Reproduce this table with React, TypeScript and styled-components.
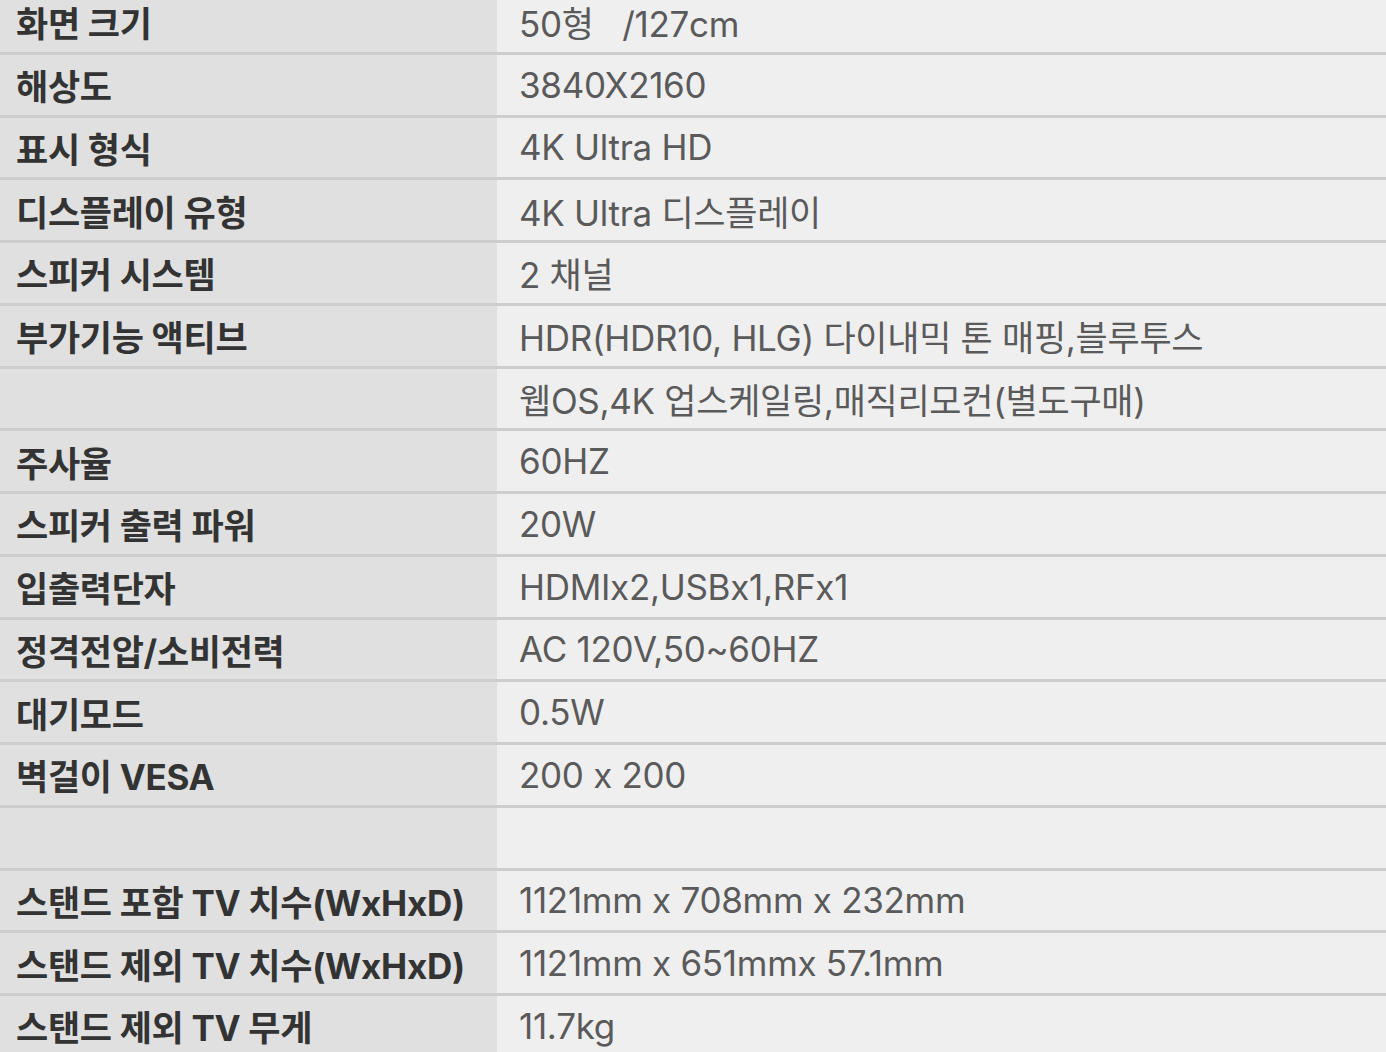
import styled, { createGlobalStyle } from "styled-components";

const GlobalStyle = createGlobalStyle`
    html, body {
        margin: 0;
        padding: 0;
        background: #efefef;
        overflow: hidden;
    }
`;

type Spec = { label: string; value: string };

const specs: Spec[] = [
    { label: "화면 크기", value: "50형   /127cm" },
    { label: "해상도", value: "3840X2160" },
    { label: "표시 형식", value: "4K Ultra HD" },
    { label: "디스플레이 유형", value: "4K Ultra 디스플레이" },
    { label: "스피커 시스템", value: "2 채널" },
    { label: "부가기능 액티브", value: "HDR(HDR10, HLG) 다이내믹 톤 매핑,블루투스" },
    { label: "", value: "웹OS,4K 업스케일링,매직리모컨(별도구매)" },
    { label: "주사율", value: "60HZ" },
    { label: "스피커 출력 파워", value: "20W" },
    { label: "입출력단자", value: "HDMIx2,USBx1,RFx1" },
    { label: "정격전압/소비전력", value: "AC 120V,50~60HZ" },
    { label: "대기모드", value: "0.5W" },
    { label: "벽걸이 VESA", value: "200 x 200" },
    { label: "", value: "" },
    { label: "스탠드 포함 TV 치수(WxHxD)", value: "1121mm x 708mm x 232mm" },
    { label: "스탠드 제외 TV 치수(WxHxD)", value: "1121mm x 651mmx 57.1mm" },
    { label: "스탠드 제외 TV 무게", value: "11.7kg" },
];

const App = () => {
    return <>
        <GlobalStyle />
        <SpecTable>
            {specs.map((s, i) => (
                <SpecRow key={i}>
                    <LabelCell>{s.label}</LabelCell>
                    <ValueCell>{s.value}</ValueCell>
                </SpecRow>
            ))}
        </SpecTable>
    </>
}

export default App;

const SpecTable = styled.div`
    margin-top: -8px;
    width: 1386px;
`;

const SpecRow = styled.div`
    display: grid;
    grid-template-columns: 497px 1fr;
    height: 62.75px;
    box-sizing: border-box;
    border-bottom: 3px solid #cdcdcd;
`;

const LabelCell = styled.div`
    display: flex;
    align-items: center;
    padding-left: 16px;
    background: #dfe0df;
    color: #333333;
    font-family: Inter, "Noto Sans CJK KR", sans-serif;
    font-weight: 700;
    font-size: 35px;
    letter-spacing: -0.3px;
    white-space: pre;
`;

const ValueCell = styled.div`
    display: flex;
    align-items: center;
    padding-left: 22px;
    background: #efefef;
    color: #5a5a5a;
    font-family: Inter, "Noto Sans CJK KR", sans-serif;
    font-weight: 400;
    font-size: 35px;
    letter-spacing: -0.3px;
    white-space: pre;
`;
